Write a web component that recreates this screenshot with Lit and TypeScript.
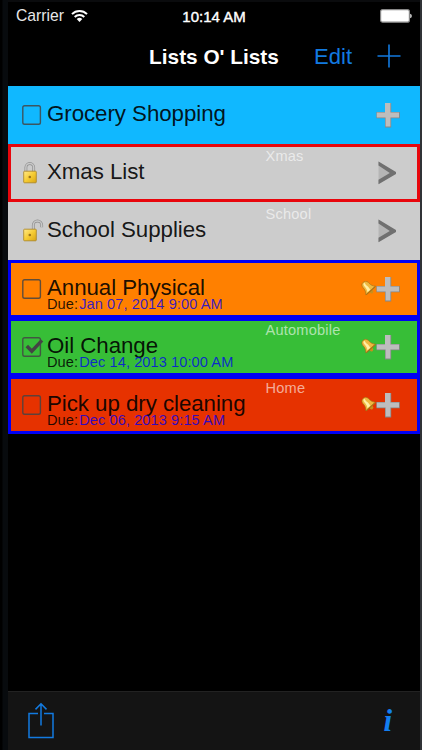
import { LitElement, css, html, nothing, svg } from "lit";
import { customElement, property } from "lit/decorators.js";

type Kind = "unchecked" | "checked" | "locked" | "unlocked";

interface ListItem {
    title: string;
    kind: Kind;
    color: string;
    border?: string;
    tag?: string;
    due?: string;
}

const ITEMS: ListItem[] = [
    { title: "Grocery Shopping", kind: "unchecked", color: "#10b8ff" },
    { title: "Xmas List", kind: "locked", color: "#cccccc", border: "#e8060c", tag: "Xmas" },
    { title: "School Supplies", kind: "unlocked", color: "#cccccc", tag: "School" },
    { title: "Annual Physical", kind: "unchecked", color: "#ff8000", border: "#0000f4", due: "Jan 07, 2014 9:00 AM" },
    { title: "Oil Change", kind: "checked", color: "#37be37", border: "#0000f4", tag: "Automobile", due: "Dec 14, 2013 10:00 AM" },
    { title: "Pick up dry cleaning", kind: "unchecked", color: "#e63200", border: "#0000f4", tag: "Home", due: "Dec 06, 2013 9:15 AM" }
];

@customElement("list-row")
class ListRow extends LitElement {
    @property({ attribute: false }) item!: ListItem;

    static styles = css`
        :host {
            display: block;
        }

        .row {
            box-sizing: border-box;
            height: 58px;
            border: 3px solid transparent;
            display: grid;
            grid-template-columns: 36px 218.5px 1fr;
            position: relative;
            color: #000;
        }

        .mark {
            padding: 14px 0 0 10px;
        }

        .text {
            padding-top: 13px;
            white-space: nowrap;
        }

        .title {
            font-size: 22.3px;
            letter-spacing: -0.05px;
            line-height: 23px;
            height: 23px;
            color: rgba(0, 0, 0, 0.9);
        }

        .due {
            display: flex;
            gap: 1px;
            font-size: 14.6px;
            letter-spacing: 0.08px;
            line-height: 14px;
            margin-top: -2px;
            color: rgba(0, 0, 0, 0.85);
        }

        .date {
            color: rgba(0, 0, 238, 0.78);
        }

        .tag {
            font-size: 14.6px;
            letter-spacing: 0.2px;
            line-height: 18px;
            color: rgba(255, 255, 255, 0.6);
        }

        .actions {
            position: absolute;
            right: 17px;
            top: 12px;
            display: flex;
            align-items: flex-start;
        }

        .bell {
            margin: 6px 0 0 0;
        }

        svg {
            display: block;
        }
    `;

    renderMark(kind: Kind) {
        if (kind === "locked" || kind === "unlocked") {
            const open = kind === "unlocked";
            const shackle = open ? "M12.3 10V6.2a4.2 4.2 0 0 1 8.4 0v2" : "M4.9 11V6.4a3.9 3.9 0 0 1 7.8 0v4.6";
            return html`
                <svg width="24" height="24" viewBox="0 0 24 24">
                    <defs>
                        <linearGradient id="gold" x1="0" y1="0" x2="1" y2="1">
                            <stop offset="0" stop-color="#ffe98a"></stop>
                            <stop offset="0.5" stop-color="#f6cc33"></stop>
                            <stop offset="1" stop-color="#d9a514"></stop>
                        </linearGradient>
                    </defs>
                    <path d=${shackle} fill="none" stroke="#8e8e8e" stroke-width="2.8"></path>
                    <path d=${shackle} fill="none" stroke="#c8c8c8" stroke-width="1.5"></path>
                    <rect x="2.7" y="10.2" width="12.6" height="11.6" rx="0.8" fill="url(#gold)" stroke="#a98320" stroke-width="0.8"></rect>
                    <circle cx="8.8" cy="16" r="1.3" fill="#9b741b"></circle>
                </svg>
            `;
        }
        return html`
            <svg width="24" height="24" viewBox="0 0 24 24">
                <rect x="1.8" y="2.8" width="17.6" height="18.4" rx="1.8" fill="none" stroke="#444" stroke-opacity="0.85" stroke-width="1.4"></rect>
                ${kind === "checked" ? svg`<path d="M5.8 11l5 5.2L21 5.4" fill="none" stroke="#444" stroke-width="3.5"></path>` : nothing}
            </svg>
        `;
    }

    renderBell() {
        return html`
            <svg class="bell" width="15" height="15" viewBox="0 0 15 15">
                <g transform="translate(6.8 6.4) rotate(-42) scale(1.1)">
                    <circle cx="0" cy="5" r="1.7" fill="#c98e1c"></circle>
                    <path d="M0-6.2c2.6 0 3.4 1.8 3.4 4 0 2.6.8 4.2 2.5 6.2H-5.9c1.7-2 2.5-3.6 2.5-6.2 0-2.2.8-4 3.4-4z" fill="#efb940" stroke="#9e6a12" stroke-width="0.5"></path>
                    <path d="M-.8-5.2c-1.5 2.2.1 4.6-2.4 8.4h3.4c1.3-3.4-.7-5.6.6-8.2z" fill="#fff0a6"></path>
                    <path d="M-5.4 4h10.8" stroke="#a87419" stroke-width="1"></path>
                </g>
            </svg>
        `;
    }

    renderAction(kind: Kind) {
        if (kind === "locked" || kind === "unlocked") {
            return html`
                <svg width="24" height="28" viewBox="0 0 24 28">
                    <path d="M2.5 2.5v22.5L20 14z" fill="#b5b5b5"></path>
                    <path d="M2.5 2.5L20 13v2L2.5 25.2V20.8L13.8 14L2.5 6.6z" fill="#707070"></path>
                </svg>
            `;
        }
        return html`
            <svg width="24" height="28" viewBox="0 0 24 28">
                <path d="M9 2h6.2v9h8.6v6.2h-8.6v9.2H9v-9.2H.4V11H9z" fill="#858585"></path>
                <path d="M9 2h5.4v9.4h8.6v5h-8.6v9.2H9.6v-9.2H.8v-5H9z" fill="#bdbdbd"></path>
            </svg>
        `;
    }

    render() {
        const { title, kind, color, border, tag, due } = this.item;
        return html`
            <div class="row" style="background-color: ${color}; border-color: ${border ?? color}">
                <div class="mark">${this.renderMark(kind)}</div>
                <div class="text">
                    <div class="title">${title}</div>
                    ${due ? html`<div class="due"><span>Due:</span><span class="date">${due}</span></div>` : nothing}
                </div>
                <div class="tag">${tag ?? nothing}</div>
                <div class="actions">
                    ${due ? this.renderBell() : nothing}
                    ${this.renderAction(kind)}
                </div>
            </div>
        `;
    }
}

@customElement("app-root")
class AppRoot extends LitElement {
    static styles = css`
        :host {
            display: block;
            font-family: "Liberation Sans", Arial, sans-serif;
        }

        .frame {
            box-sizing: border-box;
            width: 422px;
            height: 750px;
            padding: 2px 2px 0 8px;
            background: linear-gradient(to right, #000 0 2px, #080b0e 3px 8px, #0a0b0d 8px 420px, #303336 420px);
            overflow: hidden;
        }

        .screen {
            height: 748px;
            background: #000;
            display: flex;
            flex-direction: column;
        }

        .status {
            height: 28px;
            display: grid;
            grid-template-columns: 1fr auto 1fr;
            align-items: center;
            padding: 0 8px;
            color: #e8e8e8;
        }

        .carrier {
            display: flex;
            align-items: center;
            gap: 7px;
            font-size: 15.7px;
        }

        .time {
            font-size: 15px;
            color: #fff;
            -webkit-text-stroke: 0.4px #fff;
        }

        .battery {
            justify-self: end;
        }

        .nav {
            height: 56px;
            display: grid;
            grid-template-columns: 1fr auto 1fr;
            align-items: center;
            color: #fff;
        }

        .heading {
            grid-column: 2;
            font-size: 20.8px;
            font-weight: bold;
            white-space: nowrap;
            padding-bottom: 2px;
        }

        .buttons {
            display: flex;
            justify-content: flex-end;
            align-items: center;
            gap: 24.5px;
            padding: 0 19.5px 2px 0;
            color: #127ae0;
            font-size: 22px;
        }

        .list {
            flex: 1;
        }

        .toolbar {
            box-sizing: border-box;
            height: 59px;
            border-top: 1px solid #222;
            background: #141414;
            display: flex;
            justify-content: space-between;
            align-items: center;
            padding: 0 28px 0 19px;
        }

        .info {
            font-family: "Liberation Serif", "Times New Roman", serif;
            font-size: 31px;
            font-style: italic;
            font-weight: bold;
            color: #127ff0;
            line-height: 38px;
        }

        svg {
            display: block;
        }
    `;

    render() {
        return html`
            <div class="frame">
                <div class="screen">
                    <div class="status">
                        <div class="carrier">
                            <span>Carrier</span>
                            <svg width="17" height="14" viewBox="0 0 17 14">
                                <path d="M1 5.1a10.6 10.6 0 0 1 15 0M3.7 8a6.8 6.8 0 0 1 9.6 0" fill="none" stroke="#fff" stroke-width="2"></path>
                                <path d="M5.7 10.1a4 4 0 0 1 5.6 0L8.5 13z" fill="#fff"></path>
                            </svg>
                        </div>
                        <span class="time">10:14 AM</span>
                        <svg class="battery" width="32" height="14" viewBox="0 0 32 14">
                            <rect x="0.6" y="0.6" width="28.8" height="12.6" rx="2" fill="#fff" stroke="#888" stroke-width="1.2"></rect>
                            <path d="M30.2 4.8q1.6.4 1.6 2.2t-1.6 2.2z" fill="#ddd"></path>
                        </svg>
                    </div>
                    <div class="nav">
                        <span class="heading">Lists O' Lists</span>
                        <div class="buttons">
                            <span>Edit</span>
                            <svg width="24" height="26" viewBox="0 0 24 26">
                                <path d="M12 .5v23M.5 12h23" stroke="#127ae0" stroke-width="1.6"></path>
                            </svg>
                        </div>
                    </div>
                    <div class="list">
                        ${ITEMS.map(item => html`<list-row .item=${item}></list-row>`)}
                    </div>
                    <div class="toolbar">
                        <svg width="28" height="38" viewBox="0 0 28 38">
                            <path d="M11 11.5H2v24h24v-24h-9M14 23.5V2M8.5 7.4L14 1.8l5.5 5.6" fill="none" stroke="#127ae0" stroke-width="1.5"></path>
                        </svg>
                        <span class="info">i</span>
                    </div>
                </div>
            </div>
        `;
    }
}
